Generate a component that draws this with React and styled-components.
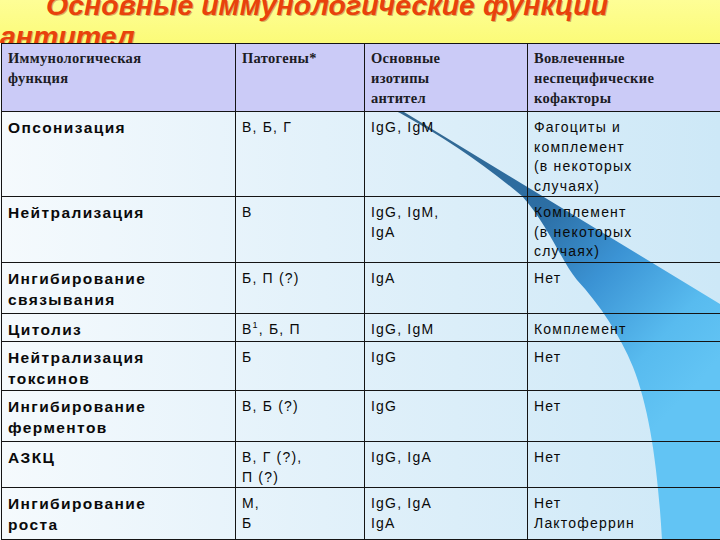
import React from "react";
import styled, { createGlobalStyle } from "styled-components";

const GlobalStyle = createGlobalStyle`
  html, body {
    margin: 0;
    padding: 0;
  }
  body {
    font-family: "Liberation Sans", Arial, sans-serif;
    background: #fdfd86;
  }
`;

const Slide = styled.div`
  width: 720px;
  height: 540px;
  overflow: hidden;
  background: linear-gradient(180deg, #fefe96 0%, #fbfb78 43px, #d4ecf8 43px);
`;

const TitleBox = styled.div`
  height: 43px;
  overflow: hidden;
`;

const Title = styled.h1`
  margin: -10px 0 0 0;
  font-family: "Liberation Sans", Arial, sans-serif;
  font-size: 28.5px;
  line-height: 31px;
  font-weight: bold;
  font-style: italic;
  color: #e8420c;
  text-indent: 46px;
  text-shadow: 1px 1px 0 rgba(150, 30, 0, 0.35);
`;

const TableWrap = styled.div`
  position: relative;
  background: linear-gradient(90deg, #f5fafd 0%, #e2f1fa 45%, #cde8f7 100%);
`;

const Swoosh = styled.svg`
  position: absolute;
  left: 0;
  top: 0;
  width: 720px;
  height: 497px;
`;

const Table = styled.table`
  position: relative;
  width: 722px;
  margin-left: 1px;
  border-collapse: collapse;
  table-layout: fixed;
`;

const Row = styled.tr`
  height: ${(p) => p.$h}px;
`;

const HeadCell = styled.th`
  background: #cbcbf7;
  border: 1px solid #141414;
  padding: 4px 6px 0 6px;
  vertical-align: top;
  text-align: left;
  font-family: "Liberation Serif", "Times New Roman", serif;
  font-size: 14.5px;
  line-height: 20px;
  font-weight: bold;
  color: #1c1c24;
  letter-spacing: 0.3px;
`;

const FuncCell = styled.td`
  border: 1px solid #141414;
  padding: 5px 6px 0 6px;
  vertical-align: top;
  font-size: 15.5px;
  line-height: 21px;
  font-weight: bold;
  color: #0a0a0a;
  letter-spacing: 1.4px;
`;

const Cell = styled.td`
  border: 1px solid #141414;
  padding: 6px 6px 0 6px;
  vertical-align: top;
  font-size: 14px;
  line-height: 19.5px;
  color: #0a0a0a;
  letter-spacing: 1.2px;
`;

const Sup = styled.sup`
  font-size: 9px;
  line-height: 0;
`;

const cols = [234, 129, 163, 196];

const rows = [
  { h: 83, f: ["Опсонизация"], p: ["В, Б, Г"], i: ["IgG, IgM"], k: ["Фагоциты и", "комплемент", "(в некоторых", "случаях)"] },
  { h: 66, f: ["Нейтрализация"], p: ["В"], i: ["IgG,  IgM,", "IgA"], k: ["Комплемент", "(в некоторых", "случаях)"] },
  { h: 51, f: ["Ингибирование", "связывания"], p: ["Б, П (?)"], i: ["IgA"], k: ["Нет"] },
  { h: 28, f: ["Цитолиз"], p: [<>В<Sup>1</Sup>, Б, П</>], i: ["IgG,  IgM"], k: ["Комплемент"] },
  { h: 49, f: ["Нейтрализация", "токсинов"], p: ["Б"], i: ["IgG"], k: ["Нет"] },
  { h: 51, f: ["Ингибирование", "ферментов"], p: ["В, Б (?)"], i: ["IgG"], k: ["Нет"] },
  { h: 46, f: ["АЗКЦ"], p: ["В, Г (?),", "П (?)"], i: ["IgG, IgA"], k: ["Нет"] },
  { h: 52, f: ["Ингибирование", "роста"], p: ["М,", "Б"], i: ["IgG,  IgA", "IgA"], k: ["Нет", "Лактоферрин"] },
];

const Lines = ({ items }) =>
  items.map((t, n) => (
    <React.Fragment key={n}>
      {n > 0 && <br />}
      {t}
    </React.Fragment>
  ));

export default function App() {
  return (
    <>
      <GlobalStyle />
      <Slide>
        <TitleBox>
          <Title>Основные иммунологические функции антител</Title>
        </TitleBox>
        <TableWrap>
          <Swoosh viewBox="0 43 720 497">
            <defs>
              <linearGradient id="wedge" x1="420" y1="120" x2="700" y2="380" gradientUnits="userSpaceOnUse">
                <stop offset="0" stopColor="#336891" />
                <stop offset="0.4" stopColor="#2c6ea4" />
                <stop offset="0.62" stopColor="#3b93d4" />
                <stop offset="0.85" stopColor="#58bbef" />
                <stop offset="1" stopColor="#62c4f4" />
              </linearGradient>
            </defs>
            <path
              d="M 250 43 C 310 68, 360 90, 404 112 L 720 304 L 720 540 L 662 540 C 658 470, 650 410, 633 367 C 620 335, 600 305, 577 280 C 562 262, 548 225, 522 196 C 485 165, 445 138, 400 113 C 340 85, 290 60, 250 43 Z"
              fill="url(#wedge)"
            />
          </Swoosh>
          <Table>
            <colgroup>
              {cols.map((w, n) => (
                <col key={n} style={{ width: w }} />
              ))}
            </colgroup>
            <thead>
              <Row $h={68}>
                <HeadCell>Иммунологическая<br />функция</HeadCell>
                <HeadCell>Патогены*</HeadCell>
                <HeadCell>Основные<br />изотипы<br />антител</HeadCell>
                <HeadCell>Вовлеченные<br />неспецифические<br />кофакторы</HeadCell>
              </Row>
            </thead>
            <tbody>
              {rows.map((r, n) => (
                <Row key={n} $h={r.h}>
                  <FuncCell><Lines items={r.f} /></FuncCell>
                  <Cell><Lines items={r.p} /></Cell>
                  <Cell><Lines items={r.i} /></Cell>
                  <Cell><Lines items={r.k} /></Cell>
                </Row>
              ))}
            </tbody>
          </Table>
        </TableWrap>
      </Slide>
    </>
  );
}
